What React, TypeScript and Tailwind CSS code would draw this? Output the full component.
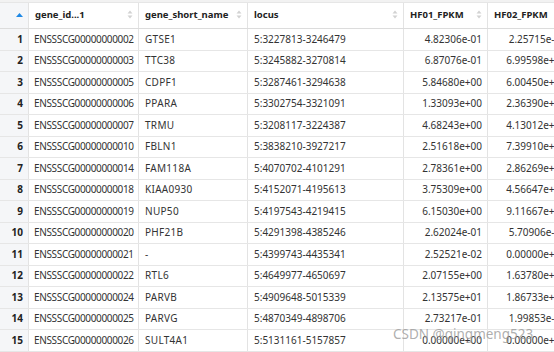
import React from "react";

type Row = { id: string; name: string; locus: string; hf01: string; hf02: string };

const rows: Row[] = [
  { id: "ENSSSCG00000000002", name: "GTSE1", locus: "5:3227813-3246479", hf01: "4.82306e-01", hf02: "2.25715e-01" },
  { id: "ENSSSCG00000000003", name: "TTC38", locus: "5:3245882-3270814", hf01: "6.87076e-01", hf02: "6.99598e+00" },
  { id: "ENSSSCG00000000005", name: "CDPF1", locus: "5:3287461-3294638", hf01: "5.84680e+00", hf02: "6.00450e+00" },
  { id: "ENSSSCG00000000006", name: "PPARA", locus: "5:3302754-3321091", hf01: "1.33093e+00", hf02: "2.36390e+00" },
  { id: "ENSSSCG00000000007", name: "TRMU", locus: "5:3208117-3224387", hf01: "4.68243e+00", hf02: "4.13012e+00" },
  { id: "ENSSSCG00000000010", name: "FBLN1", locus: "5:3838210-3927217", hf01: "2.51618e+00", hf02: "7.39910e+00" },
  { id: "ENSSSCG00000000014", name: "FAM118A", locus: "5:4070702-4101291", hf01: "2.78361e+00", hf02: "2.86269e+00" },
  { id: "ENSSSCG00000000018", name: "KIAA0930", locus: "5:4152071-4195613", hf01: "3.75309e+00", hf02: "4.56647e+00" },
  { id: "ENSSSCG00000000019", name: "NUP50", locus: "5:4197543-4219415", hf01: "6.15030e+00", hf02: "9.11667e+00" },
  { id: "ENSSSCG00000000020", name: "PHF21B", locus: "5:4291398-4385246", hf01: "2.62024e-01", hf02: "5.70906e-01" },
  { id: "ENSSSCG00000000021", name: "-", locus: "5:4399743-4435341", hf01: "2.52521e-02", hf02: "0.00000e+00" },
  { id: "ENSSSCG00000000022", name: "RTL6", locus: "5:4649977-4650697", hf01: "2.07155e+00", hf02: "1.63780e+00" },
  { id: "ENSSSCG00000000024", name: "PARVB", locus: "5:4909648-5015339", hf01: "2.13575e+01", hf02: "1.86733e+01" },
  { id: "ENSSSCG00000000025", name: "PARVG", locus: "5:4870349-4898706", hf01: "2.73217e-01", hf02: "1.99853e-01" },
  { id: "ENSSSCG00000000026", name: "SULT4A1", locus: "5:5131161-5157857", hf01: "0.00000e+00", hf02: "0.00000e+00" },
];

const grid = "grid grid-cols-[29px_110px_109px_156px_84px_84px]";

function SortIcon() {
  return (
    <svg width="6" height="9" viewBox="0 0 6 9" className="absolute right-[5px] top-[7px]">
      <path d="M3 0.5 L5.5 3.5 L0.5 3.5 Z" fill="#d2d2d2" />
      <path d="M3 8.5 L5.5 5.5 L0.5 5.5 Z" fill="#d2d2d2" />
    </svg>
  );
}

function Head({ label, sortable = true }: { label: string; sortable?: boolean }) {
  return (
    <div className="relative h-[25px] flex items-center pl-[6px] border-r border-[#e3e3e3] font-bold text-[9.5px] text-[#222] overflow-hidden whitespace-nowrap">
      {label}
      {sortable && <SortIcon />}
    </div>
  );
}

export default function App() {
  return (
    <div
      className="relative w-[554px] h-[352px] overflow-hidden bg-white text-[10px] text-[#333]"
      style={{ fontFamily: '"Noto Sans", "Open Sans", sans-serif' }}
    >
      <div className="h-[3px] bg-[#f2f2f2] border-b border-[#e6e6e6]" />
      <div className={`${grid} w-max border-b border-[#dcdcdc]`}>
        <div className="relative h-[25px] bg-[#f5f6f8] border-r border-[#e3e3e3]">
          <svg width="7" height="4" viewBox="0 0 7 4" className="absolute right-[5px] top-[10px]">
            <path d="M3.5 0 L7 4 L0 4 Z" fill="#1e88e5" />
          </svg>
        </div>
        <Head label="gene_id...1" />
        <Head label="gene_short_name" />
        <Head label="locus" />
        <Head label="HF01_FPKM" />
        <Head label="HF02_FPKM" sortable={false} />
      </div>
      {rows.map((r, i) => (
        <div key={r.id} className={`${grid} w-max h-[21.5px] border-b border-[#e6e6e6]`}>
          <div className="flex items-center justify-end pr-[5px] bg-[#f5f6f8] border-r border-[#e3e3e3] font-bold text-[#222]">
            {i + 1}
          </div>
          <div className="flex items-center pl-[5px] border-r border-[#e3e3e3] whitespace-nowrap tracking-[-0.35px]">{r.id}</div>
          <div className="flex items-center pl-[6px] border-r border-[#e3e3e3] whitespace-nowrap tracking-[0.3px]">{r.name}</div>
          <div className="flex items-center pl-[6px] border-r border-[#e3e3e3] whitespace-nowrap">{r.locus}</div>
          <div className="flex items-center justify-end pr-[5px] border-r border-[#e3e3e3] whitespace-nowrap">{r.hf01}</div>
          <div className="flex items-center justify-end pr-[5px] border-r border-[#e3e3e3] whitespace-nowrap">{r.hf02}</div>
        </div>
      ))}
      <div className="absolute left-[393px] top-[324px] text-[13.5px] text-[#9a9a9a]/80 whitespace-nowrap">
        CSDN @qingmeng523
      </div>
    </div>
  );
}
